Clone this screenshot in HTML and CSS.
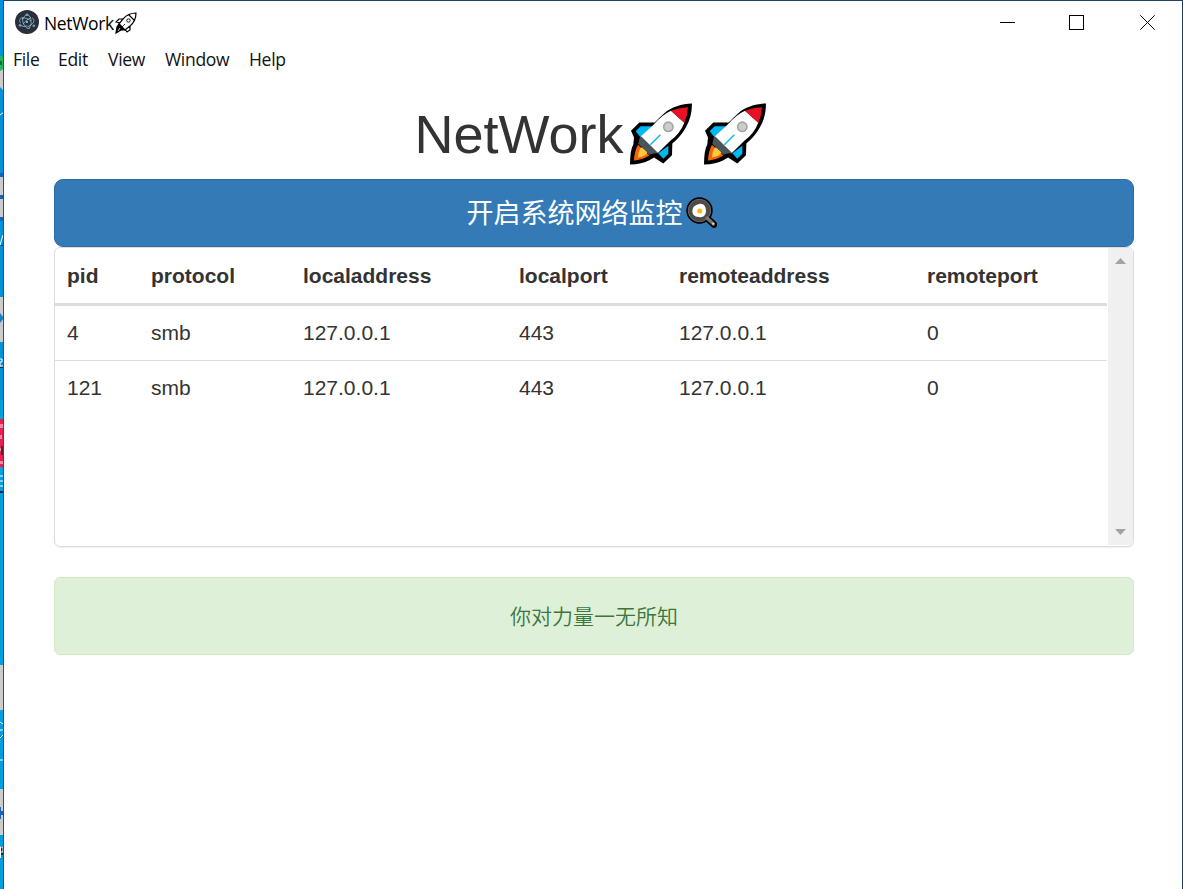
FILE: index.html
```html
<!DOCTYPE html>
<html lang="zh">
<head>
<meta charset="utf-8">
<title>NetWork</title>
<link rel="stylesheet" href="styles.css">
</head>
<body>
<svg class="defs" width="0" height="0" aria-hidden="true">
  <symbol id="rocket" viewBox="30 25 186 183">
    <path fill="#000" d="M216 25C186 26 153 36 133 54Q118 67 104 82H58L33 107L42 127L40 147Q30 166 30 208Q66 207 88 195L102 187L130 205L156 180L157 145Q182 125 197 98Q216 66 216 25Z"/>
    <path fill="#00b9f2" d="M62 93H97L64 125L59 123L47 108ZM145 152V176L130 191L115 174Z"/>
    <path fill="#fff" d="M99 90Q128 58 153 47Q170 63 193 83Q180 116 151 137L113 174L61 125Z"/>
    <path fill="#e81224" d="M153 47Q178 37 204 36Q203 61 193 83Z"/>
    <path fill="#4b545a" d="M60 124L65 125L115 174L101 175L87 179L55 146Z"/>
    <path fill="#f7630c" d="M54 149L88 181Q65 195 42 196Q43 169 54 149Z"/>
    <path fill="#ffc83d" d="M59 163Q63 154 67 158L80 170Q84 175 74 181Q65 186 54 187Q54 174 59 163Z"/>
    <circle cx="145" cy="95" r="14" fill="#ccc" stroke="#a5a5a5" stroke-width="5"/>
    <path d="M91 149L121 119" stroke="#00b9f2" stroke-width="4" fill="none"/>
  </symbol>
</svg>
<div class="screen">
  <svg class="desktop" viewBox="0 0 4 889" width="4" height="889">
    <rect width="4" height="889" fill="#00a0e0"/>
    <rect width="4" height="400" fill="#0292dc"/>
    <path fill="#20ba5a" d="M0 55L3 57V69L0 71Z"/><path fill="#126b3c" d="M0 61h2v4H0z"/>
    <path fill="#ccc" d="M0 71L3 69V90L0 87ZM0 177h4v18H0zM0 199h4v18H0zM0 297h4v45H0zM0 665h4v45H0zM0 789h4v46H0z"/>
    <path fill="#1763b8" d="M0 173h4v4H0zM0 195h4v4H0zM0 217h4v4H0zM0 811h4v4H0zM0 807h1v12H0z"/>
    <path fill="#1681c6" d="M0 313L4 318L0 323Z"/>
    <path stroke="#fff" fill="none" d="M0 115L4 112M0 245L3 235M0 359h2v3H0v4h3M0 476h3M0 481h3M0 486h3M0 722l3 2M0 730h3M0 738l3-3M0 760h3"/>
    <path fill="#102b45" d="M1 245h2v-9h1v10H1zM0 367h3v1H0zM0 491h3v2H0zM1 846h3v9H1z"/>
    <path fill="#e91e55" d="M0 419h4v48H0z"/><path fill="#f28a9d" d="M0 424h3v4H0zM0 435h2v4H0zM0 448h2v3H0zM0 461h4v3H0z"/><path fill="#602030" d="M1 446h3v9H1z"/>
    <path stroke="#fff" fill="none" d="M.5 858V847H3V852H.5"/>
    <rect x="3" width="1" height="889" fill="#17577d"/>
  </svg>
  <div class="window">
    <header class="titlebar">
      <svg class="app-icon" viewBox="0 0 24 24">
        <circle cx="12" cy="12" r="12" fill="#2b2e3a"/>
        <g fill="none" stroke="#9feaf9" stroke-width=".8" opacity=".75" stroke-linecap="round">
          <path d="M5.200 12.800C4 10.500 4.500 8.300 7 7.800C9.500 7.400 13 8.700 15.500 10.500M7.500 8Q7 12 9.500 15.800Q12 19.500 14.500 18.500M13 5Q15 5.500 16 9Q17 14 14.500 18M17.500 8Q20 9 18.800 12Q17 15 12.500 17M8.500 13.500Q10.500 10 15.500 7.800M5.800 15.800Q8.500 17.200 12 16M11 5Q8.800 6 8 9"/>
        </g>
        <g fill="none" stroke="#9feaf9" stroke-width=".7"><circle cx="12" cy="4.700" r=".9"/><circle cx="5" cy="15.400" r=".9"/><circle cx="18.800" cy="15.800" r=".9"/></g>
        <circle cx="12" cy="12" r=".9" fill="#9feaf9"/>
      </svg>
      <span class="app-title">NetWork</span>
      <svg class="mini-rocket" viewBox="0 0 22 22" fill="none" stroke="#000" stroke-width="1.2">
        <path d="M21 1Q13 1 8 7L4 12L10 18L15 14Q21 9 21 1ZM14 3L19 8M8 7H4L1 10L5 11M15 14V18L12 20L10 17"/>
        <path stroke-width=".8" d="M7 15L10 12"/>
        <circle cx="13.500" cy="8.500" r="1.700" stroke-width=".9"/>
        <path fill="#000" d="M4 12L9 18L6 18L1 21L2 15Z"/>
        <path stroke="#fff" stroke-width=".8" d="M3 19L5 16"/>
      </svg>
      <svg class="controls" viewBox="0 0 155 15" width="155" height="15" fill="none" stroke="#000" shape-rendering="crispEdges">
        <path d="M0 7.500H15M69.500 .5H83.500V14.500H69.500Z"/>
        <path shape-rendering="auto" d="M140.300 .3L154.700 14.700M154.700 .3L140.300 14.700"/>
      </svg>
    </header>
    <nav class="menu"><span class="m-file">File</span><span class="m-edit">Edit</span><span class="m-view">View</span><span class="m-window">Window</span><span class="m-help">Help</span></nav>
    <main class="content">
      <h1 class="heading">NetWork<svg class="rocket"><use href="#rocket"/></svg><svg class="rocket second"><use href="#rocket"/></svg></h1>
      <button class="primary"><span class="label">开启系统网络监控</span><svg class="pan" viewBox="0 0 31 31">
        <path d="M21 21L28 27.500" stroke="#000" stroke-width="6.500" stroke-linecap="round"/>
        <circle cx="13.500" cy="13.500" r="13.200" fill="#000"/><circle cx="13.500" cy="13.500" r="11.200" fill="#4b4b4b" stroke="#6b6b6b"/>
        <path d="M21 21L27.500 27" stroke="#777" stroke-width="3.200" stroke-linecap="round"/><circle cx="27" cy="26.800" r="1" fill="#ddd"/>
        <path d="M13 7C18 6 20 10 20 14C20 18 17 21 13 20C8 20 6 17 6.500 13C7 9 10 8 13 7Z" fill="#fff"/><circle cx="13.700" cy="14" r="2.500" fill="#ffb900"/>
      </svg></button>
      <section class="panel">
        <table class="connections">
          <colgroup><col class="c1"><col class="c2"><col class="c3"><col class="c4"><col class="c5"><col></colgroup>
          <thead><tr><th>pid</th><th>protocol</th><th>localaddress</th><th>localport</th><th>remoteaddress</th><th>remoteport</th></tr></thead>
          <tbody>
            <tr><td>4</td><td>smb</td><td>127.0.0.1</td><td>443</td><td>127.0.0.1</td><td>0</td></tr>
            <tr><td>121</td><td>smb</td><td>127.0.0.1</td><td>443</td><td>127.0.0.1</td><td>0</td></tr>
          </tbody>
        </table>
        <div class="scrollbar"><svg width="11" height="6"><path d="M0 6L5.500 0L11 6Z"/></svg><svg width="11" height="6"><path d="M0 0L5.500 6L11 0Z"/></svg></div>
      </section>
      <div class="notice">你对力量一无所知</div>
    </main>
  </div>
</div>
</body>
</html>
```
FILE: styles.css
```css
* { box-sizing: border-box; }
body { margin: 0; background: #fff; color: #333; font-family: "Liberation Sans", "Noto Sans CJK SC", sans-serif; }
svg { display: block; flex: none; }
.defs { position: absolute; }
.screen { display: flex; width: 1183px; height: 889px; overflow: hidden; }
.window { flex: 1; min-width: 0; border-top: 1px solid #1a4566; border-right: 1px solid #193e66; }
.titlebar { display: flex; align-items: center; height: 42px; padding: 0 27px 0 11px; color: #000; }
.app-icon { width: 24px; height: 24px; }
.app-title { margin-left: 5px; width: 71px; font: 17.5px/24px "Open Sans", sans-serif; letter-spacing: -.35px; padding-top: 1px; }
.mini-rocket { width: 22px; height: 22px; margin-top: 1px; }
.controls { margin-left: auto; }
.menu { display: flex; height: 34px; padding-left: 9px; color: #111; font: 17.5px/33px "Open Sans", sans-serif; letter-spacing: -.3px; }
.m-file { width: 45px; }
.m-edit { width: 50px; }
.m-view { width: 57px; }
.m-window { width: 84px; }
.content { padding: 24px 48px 0 50px; }
.heading { display: flex; justify-content: center; height: 78px; margin: 0; padding-right: 8px; font-size: 54px; font-weight: 400; line-height: 66px; }
.rocket { width: 62px; height: 62px; margin: 2px 0 0 6px; }
.second { margin-left: 12px; }
.primary { display: flex; align-items: center; justify-content: center; width: 100%; height: 68px; padding: 0 5px 0 0; border: 1px solid #2e6da4; border-radius: 9px; background: #337ab7; color: #fff; font: 27px/36px "Liberation Sans", "Noto Sans CJK SC", sans-serif; }
.label { padding-top: 1px; }
.pan { width: 31px; height: 31px; margin: 0 0 1px 3px; }
.panel { display: flex; height: 300px; border: 1px solid #ddd; border-radius: 6px; box-shadow: 0 1px 1px rgba(0, 0, 0, .06); overflow: hidden; }
.connections { width: 1052px; table-layout: fixed; border-collapse: separate; border-spacing: 0; align-self: flex-start; font-size: 21px; line-height: 30px; text-align: left; }
.connections th, .connections td { padding: 0 12px; }
.connections th { height: 58px; border-bottom: 3px solid #ddd; }
.connections td { height: 55px; }
.connections tbody tr:first-child td { border-bottom: 1px solid #ddd; }
.connections tbody tr:last-child td { height: 53px; }
.c1 { width: 84px; }
.c2 { width: 152px; }
.c3 { width: 216px; }
.c4 { width: 160px; }
.c5 { width: 248px; }
.scrollbar { display: flex; flex-direction: column; align-items: center; justify-content: space-between; width: 25px; height: 297px; margin-left: 1px; padding: 10px 0; background: #f0f0f0; fill: #a3a3a3; }
.notice { display: flex; align-items: center; justify-content: center; height: 78px; margin-top: 30px; padding-bottom: 3px; border: 1px solid #d6e9c6; border-radius: 6px; background: #dff0d8; color: #3c763d; font-size: 21px; font-weight: 350; }
```
